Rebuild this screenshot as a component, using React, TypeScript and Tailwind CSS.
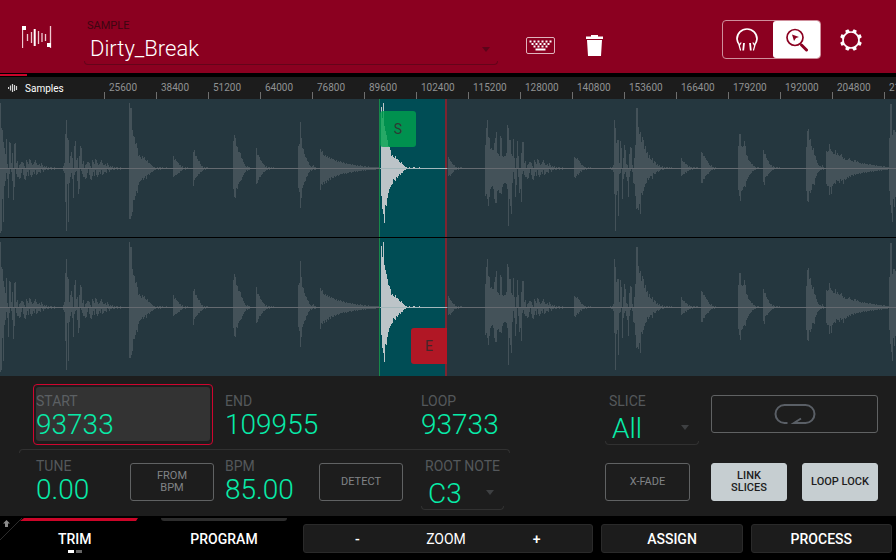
import type { ReactNode } from "react";

type Hit = { x: number; up: number[]; down: number[] };

// Decaying tail shared by the ringing drum hits.
const TAIL_UP = [7, 0, 3, 4, 6, 6, 5, 2, 0, 8, 6, 4, 9, 8, 5, 3, 4, 6, 8, 5, 3, 3, 4, 2, 5, 3, 1, 2, 1, 2, 0, 1, 0, 1, 1, 0, 0, 1];
const TAIL_DOWN = [8, 8, 10, 9, 4, 0, 6, 10, 11, 7, 3, 7, 1, 6, 8, 6, 3, 5, 1, 6, 5, 3, 3, 4, 0, 1, 3, 1, 1, 0, 1, 1, 0, 0, 1, 0, 0, 1];

const HITS: Hit[] = [
  {
    x: 0,
    up: [65, 40, 38, 26, 20, 14, 29, 4, 0, 26, 25, 5, 15, 0, 24, 25, 5, ...TAIL_UP],
    down: [64, 62, 30, 53, 17, 12, 4, 10, 29, 5, 0, 3, 12, 31, 18, 0, 5, ...TAIL_DOWN],
  },
  {
    x: 63,
    up: [2, 5, 34, 48, 30, 28, 5, 12, 16, 10, 0, 22, 27, 8, 10, 0, 12, 22, 20, 4, ...TAIL_UP],
    down: [2, 4, 33, 62, 15, 53, 14, 8, 4, 10, 29, 6, 3, 2, 12, 25, 20, 0, 2, 5, ...TAIL_DOWN],
  },
  {
    x: 129,
    up: [65, 60, 60, 38, 32, 31, 24, 25, 20, 12, 13, 11, 9, 12, 10, 11, 8, 7, 8, 5, 5, 4, 3, 2, 1, 1, 0, 0, 1, 0, 1, 1, 0, 1, 0, 0, 0, 1],
    down: [50, 50, 47, 43, 31, 31, 27, 22, 24, 16, 13, 12, 11, 9, 11, 9, 7, 10, 6, 5, 6, 4, 3, 3, 2, 1, 1, 0, 0, 1, 0, 1],
  },
  { x: 173, up: [12, 8, 9, 7, 6, 5, 3, 3, 1, 2, 0, 0, 1, 0, 1], down: [8, 7, 6, 6, 5, 4, 4, 2, 2, 1, 0, 0, 1] },
  { x: 193, up: [16, 18, 12, 12, 9, 7, 7, 4, 2, 2, 0, 1, 0, 1, 1], down: [17, 11, 9, 8, 7, 5, 5, 3, 3, 2, 1, 0, 1] },
  {
    x: 233,
    up: [27, 33, 30, 22, 21, 16, 16, 15, 10, 9, 6, 4, 2, 1, 2, 1, 1],
    down: [20, 28, 29, 19, 20, 15, 13, 12, 11, 8, 6, 4, 3, 1, 2, 1, 1],
  },
  { x: 256, up: [20, 13, 13, 11, 8, 7, 5, 4, 3, 1, 2, 0, 1, 1, 0, 1, 0, 1], down: [15, 14, 11, 8, 8, 6, 5, 3, 3, 2, 1, 1, 0, 1] },
  {
    x: 298,
    up: [22, 24, 46, 30, 20, 19, 14, 11, 10, 7, 6, 3, 2, 1, 2, 3, 1, 1],
    down: [19, 23, 39, 29, 19, 16, 13, 12, 8, 7, 4, 3, 1, 2, 1, 0, 1, 1],
  },
  {
    x: 320,
    up: [19, 16, 17, 13, 12, 13, 11, 12, 10, 11, 9, 10, 9, 9, 8, 7, 8, 6, 7, 6, 7, 6, 5, 6, 5, 4, 5, 4, 4, 4, 4, 3, 4, 3, 3, 3, 2, 3, 2, 2, 3, 2, 2, 1, 2, 2, 1, 1, 2, 1, 1, 1, 1, 1, 1, 1, 1, 1, 1],
    down: [21, 15, 16, 13, 15, 12, 14, 11, 12, 9, 11, 8, 9, 9, 7, 8, 7, 6, 7, 6, 5, 5, 5, 4, 5, 4, 5, 4, 4, 3, 3, 4, 3, 3, 2, 3, 2, 3, 2, 2, 2, 2, 1, 2, 1, 2, 1, 1, 1, 1, 1, 1, 1, 1, 1, 1],
  },
  {
    x: 381,
    up: [61, 50, 65, 42, 37, 33, 28, 22, 21, 18, 12, 13, 11, 10, 12, 9, 9, 8, 6, 5, 6, 4, 3, 2, 1, 1, 0, 0, 1, 0, 0, 0, 1, 1, 0, 0, 0, 0, 1],
    down: [27, 40, 45, 54, 36, 37, 29, 24, 20, 18, 16, 15, 10, 11, 12, 8, 9, 7, 5, 6, 4, 4, 2, 1, 1],
  },
  { x: 448, up: [11, 9, 7, 6, 4, 3, 3, 1, 1, 0, 1, 0, 1, 1], down: [7, 6, 7, 5, 4, 3, 1, 1, 1, 0, 1] },
  {
    x: 485,
    up: [23, 40, 48, 31, 30, 19, 20, 18, 18, 25, 30, 36, 15, 14, 12, 32, 30, 12, 11, 12, 12, 15, 43, 40, 28, 28, 14, 12, 29, 10, 0, 10, 27, 12, 0, 0, 15, 26, 26, 5, ...TAIL_UP],
    down: [27, 25, 30, 37, 28, 20, 18, 17, 20, 30, 34, 34, 22, 21, 24, 24, 25, 18, 15, 14, 14, 15, 20, 57, 30, 37, 45, 14, 3, 10, 28, 16, 0, 8, 24, 20, 33, 5, 2, 6, ...TAIL_DOWN],
  },
  { x: 574, up: [11, 10, 9, 10, 8, 7, 5, 3, 3, 2, 1, 1, 0, 0, 1, 0, 1], down: [8, 9, 7, 5, 6, 4, 2, 3, 1, 1, 1, 0, 1] },
  {
    x: 610,
    up: [1, 0, 1, 3, 48, 40, 25, 28, 28, 5, 27, 20, 0, 10, 23, 18, 4, 3, 0, 14, 21, 20, 3, 0, 10],
    down: [0, 1, 1, 3, 25, 62, 26, 22, 47, 5, 4, 0, 30, 10, 5, 3, 8, 12, 28, 8, 2, 0, 3, 14, 15],
  },
  {
    x: 635,
    up: [23, 60, 60, 41, 34, 36, 26, 31, 28, 19, 22, 15, 16, 10, 13, 9, 8, 10, 5, 7, 6, 3, 4, 2, 3, 1, 1, 2, 0, 1, 0, 1, 1, 0, 1, 0, 1],
    down: [27, 40, 39, 41, 35, 45, 24, 26, 22, 18, 15, 14, 9, 11, 9, 7, 7, 10, 4, 5, 5, 3, 2, 3, 2, 1, 0, 1, 1],
  },
  { x: 681, up: [10, 7, 6, 6, 4, 4, 3, 1, 2, 1, 1, 0, 1, 1, 0, 1, 1], down: [7, 6, 5, 5, 3, 4, 2, 2, 1, 1, 0, 1] },
  { x: 701, up: [16, 15, 12, 12, 10, 8, 7, 5, 3, 2, 3, 1, 1, 0, 1], down: [14, 14, 10, 10, 7, 6, 5, 5, 3, 2, 1, 1, 0, 1] },
  {
    x: 738,
    up: [22, 34, 34, 22, 21, 22, 27, 22, 13, 12, 8, 7, 6, 4, 4, 2, 2, 1, 0, 1, 1],
    down: [21, 27, 32, 22, 21, 18, 17, 18, 12, 10, 8, 6, 5, 4, 2, 2, 1, 1],
  },
  { x: 763, up: [18, 14, 14, 10, 8, 7, 4, 3, 3, 1, 2, 1, 0, 1, 1, 0, 1], down: [13, 16, 8, 7, 7, 5, 4, 3, 2, 1, 1] },
  {
    x: 806,
    up: [21, 37, 39, 28, 29, 22, 18, 20, 13, 12, 8, 5, 3, 2, 2, 1, 3, 1],
    down: [22, 32, 33, 22, 24, 21, 15, 15, 16, 9, 7, 4, 3, 2, 1, 1, 0, 1],
  },
  {
    x: 826,
    up: [17, 16, 17, 24, 19, 17, 16, 14, 14, 18, 13, 15, 13, 12, 13, 14, 11, 9, 10, 8, 8, 8, 9, 10, 8, 7, 7, 6, 8, 8, 6, 7, 6, 5, 5, 4, 5, 4, 5, 4, 4, 4, 3, 4, 4, 3, 3, 3, 3, 2, 3, 2, 2, 2, 2, 2, 1, 2, 2, 1, 1, 1, 1],
    down: [15, 17, 17, 26, 18, 25, 17, 15, 14, 15, 11, 12, 12, 14, 10, 12, 11, 15, 10, 11, 10, 8, 9, 7, 8, 6, 6, 7, 5, 6, 5, 5, 5, 4, 5, 4, 4, 3, 4, 3, 4, 3, 3, 3, 2, 3, 2, 3, 2, 2, 2, 2, 1, 2, 1, 2, 1, 1, 1, 1, 1, 1],
  },
  { x: 889, up: [30, 64, 64, 33, 38, 38, 36], down: [22, 36, 44, 53, 30, 38, 28] },
];

const MIDDLE = 69;

function wavePath(selected: boolean) {
  return HITS.filter((hit) => (hit.x === 381) === selected)
    .map((hit) =>
      hit.up
        .map((up, i) => `M${hit.x + i} ${MIDDLE - up}h1v${up + (hit.down[i] ?? 0) + 1}h-1z`)
        .join(""),
    )
    .join("");
}

const QUIET_WAVE = wavePath(false);
const SELECTED_WAVE = wavePath(true);

const RULER = [
  25600, 38400, 51200, 64000, 76800, 89600, 102400, 115200, 128000, 140800, 153600, 166400, 179200, 192000, 204800, 217600,
];

function Track() {
  return (
    <svg
      role="img"
      aria-label="Waveform"
      viewBox="0 0 896 138"
      preserveAspectRatio="none"
      shapeRendering="crispEdges"
      className="relative block h-[138px] w-full"
    >
      <path d={QUIET_WAVE} fill="#445259" />
      <rect x="0" y="69" width="896" height="1" fill="#656a70" />
      <path d={SELECTED_WAVE} fill="#bcc4c8" />
      <rect x="380" y="69" width="67" height="1" fill="#a3b7bb" />
    </svg>
  );
}

function Arrow({ className }: { className: string }) {
  return (
    <svg viewBox="0 0 8 5" aria-hidden="true" className={`pointer-events-none absolute h-[5px] w-2 ${className}`}>
      <path d="M0 0h8L4 5z" fill="currentColor" />
    </svg>
  );
}

function Field({ id, label, value, active }: { id: string; label: string; value: string; active?: boolean }) {
  return (
    <div className={active ? "rounded-[3px] bg-[#333333] pt-1.5" : ""}>
      <label htmlFor={id} className={`block text-sm leading-4 ${active ? "text-[#5c6063]" : "text-[#54585b]"}`}>
        {label}
      </label>
      <input
        id={id}
        defaultValue={value}
        className="block h-8 w-full bg-transparent text-[28px] font-light leading-8 text-[#08eba8] outline-none"
      />
    </div>
  );
}

function Picker({ id, label, options }: { id: string; label: string; options: string[] }) {
  return (
    <div>
      <label htmlFor={id} className="block pl-1 text-sm leading-4 text-[#54585b]">
        {label}
      </label>
      <div className="relative">
        <select
          id={id}
          className="block h-9 w-full appearance-none bg-transparent pl-[7px] pt-1 text-[28px] font-light leading-8 text-[#08eba8] outline-none"
        >
          {options.map((option) => (
            <option key={option}>{option}</option>
          ))}
        </select>
        <div className="pointer-events-none absolute inset-x-0 bottom-0 h-1 rounded-b border-x border-b border-[#313131]" />
        <Arrow className="right-2.5 top-4 text-[#3e4042]" />
      </div>
    </div>
  );
}

function PadButton({ lit, className, children }: { lit?: boolean; className?: string; children: ReactNode }) {
  return (
    <button
      type="button"
      className={`flex h-[38px] items-center justify-center rounded-[3px] border text-center text-[11px] leading-3 ${
        lit ? "border-[#c6ced1] bg-[#c6ced1] font-medium text-[#1d1d1d]" : "border-[#606263] text-[#808386]"
      } ${className ?? ""}`}
    >
      {children}
    </button>
  );
}

function Header() {
  return (
    <header className="flex h-[73px] bg-[#8b0020] pl-[22px] pr-[34px] text-white">
      <svg viewBox="0 0 30 24" aria-hidden="true" className="mt-[25px] h-6 w-[30px]">
        <path d="M.5 1v22M28.500 1v22M5.500 9v7M9.500 7v11M16.500 6v13M20 8v9M23.500 9v7" stroke="#efc9d0" strokeWidth="1.300" fill="none" />
        <path d="M12.700 4v17" stroke="white" strokeWidth="2" />
        <path d="M0 1h4v4H0zM25 18h4v4h-4z" fill="white" />
      </svg>
      <div className="ml-8 min-w-0 flex-1 pt-[19px]">
        <label htmlFor="sample" className="block pl-[3px] text-[11px] leading-[14px] text-[#3d0610]">
          SAMPLE
        </label>
        <div className="relative">
          <select id="sample" className="block h-8 w-full appearance-none bg-transparent pl-1.5 text-[22px] font-light leading-8 outline-none">
            <option>Dirty_Break</option>
          </select>
          <div className="pointer-events-none absolute inset-x-0 bottom-0 h-1 rounded-b border-x border-b border-[#65041a]" />
          <Arrow className="right-2 top-3.5 text-[#5d041a]" />
        </div>
      </div>
      <button type="button" aria-label="Keyboard" className="ml-7 mt-[37px] h-[17px]">
        <svg viewBox="0 0 29 17" className="h-[17px] w-[29px]">
          <rect x=".5" y=".5" width="28" height="16" rx="1.500" fill="none" stroke="#dfb3bc" />
          <path d="M3.500 4.500h23M5.500 7h19M7.500 9.500h15" stroke="white" strokeWidth="2" strokeDasharray="2 2" />
          <path d="M9.500 12.500h10" stroke="white" strokeWidth="2" />
        </svg>
      </button>
      <button type="button" aria-label="Delete" className="ml-[31px] mt-[35px] h-[21px]">
        <svg viewBox="0 0 17 21" className="h-[21px] w-[17px]">
          <path d="M0 1.500h5V0h7v1.500h5V4H0zM1 5h15l-1 16H2z" fill="white" />
        </svg>
      </button>
      <div className="ml-[119px] mt-5 flex h-[39px] w-[99px] rounded border border-[#cf8f9c]">
        <button type="button" aria-label="Audition" className="flex w-[50px] items-center justify-center">
          <svg viewBox="0 0 24 24" className="h-6 w-6" fill="none" stroke="white">
            <path d="M3.800 17.500C2 15 1 13.200 1 11a10 10 0 0 1 20 0c0 2.200-1 4-2.800 6.500" strokeWidth="1.700" />
            <path d="M5.200 14.500 3.200 17.500 4.600 22.500M16.800 14.500l2 3-1.400 5" strokeWidth="1.200" />
            <path d="M8 15 7.200 22.500M14 15l.8 7.500" strokeWidth="1.800" />
          </svg>
        </button>
        <button type="button" aria-label="Cursor zoom" className="flex flex-1 items-center justify-center rounded-[3px] bg-white text-[#8b0020]">
          <svg viewBox="0 0 24 24" className="h-6 w-6">
            <circle cx="10" cy="9.500" r="8" fill="none" stroke="currentColor" strokeWidth="1.700" />
            <path d="M7 6.500l7 2.500-3 1-2 3z" fill="currentColor" />
            <path d="m16.500 17 5 5" stroke="currentColor" strokeWidth="3" strokeLinecap="round" />
          </svg>
        </button>
      </div>
      <button type="button" aria-label="Settings" className="ml-[19px] mt-[29px] h-[22px]">
        <svg viewBox="-11 -11 22 22" className="h-[22px] w-[22px]">
          <circle r="8" fill="none" stroke="white" strokeWidth="1.700" />
          {[22.5, 67.5, 112.5, 157.5, 202.5, 247.5, 292.5, 337.5].map((angle) => (
            <path key={angle} d="M-2.200-8-1.600-11h3.200L2.200-8z" fill="white" transform={`rotate(${angle})`} />
          ))}
        </svg>
      </button>
    </header>
  );
}

function Ruler() {
  return (
    <div className="flex h-[22px] overflow-hidden bg-[#1c1c1c]">
      <div className="flex w-[104px] shrink-0 items-center pl-2 text-[10px] text-white">
        <svg viewBox="0 0 10 8" aria-hidden="true" className="mr-[7px] h-2 w-2.5">
          <path d="M.5 3v2M2.500 1.500v5M4.500 0v8M6.500 1v6M8.500 2v4" stroke="#d5d5d5" strokeWidth="1.200" />
        </svg>
        Samples
      </div>
      <ol className="flex min-w-0 flex-1">
        {RULER.map((mark) => (
          <li key={mark} className="relative w-[52px] shrink-0 pl-[5px] text-[10px] leading-[22px] text-[#909293]">
            <i className="absolute bottom-0 left-0 h-[7px] w-px bg-[#6e6e6e]" />
            {mark}
          </li>
        ))}
      </ol>
    </div>
  );
}

function Waves() {
  return (
    <section aria-label="Sample" className="relative bg-[#25373f]">
      <div className="absolute inset-y-0 left-[42.3%] w-[7.6%] border-l border-r-2 border-l-[#17884a] border-r-[#7d2430] bg-[#004d55]" />
      <Track />
      <div className="relative h-px bg-black" />
      <Track />
      <div className="pointer-events-none absolute inset-y-0 left-[42.3%] w-[7.6%] text-sm text-[#2f3a33]">
        <span className="absolute left-px top-3 flex h-9 w-9 items-center justify-center rounded-[3px] bg-[#00a24e]/80">S</span>
        <span className="absolute bottom-3 right-0 flex h-9 w-9 items-center justify-center rounded-l-[3px] bg-[#bb1423]/95 text-[#43262a]">E</span>
      </div>
    </section>
  );
}

function Controls() {
  return (
    <section className="bg-[#1d1d1d] pb-1.5 pl-[34px] pr-[18px] pt-2">
      <div className="grid grid-cols-[96fr_95fr_94fr_102fr_184fr_106fr_91fr_76fr]">
        <div className="col-span-2 -ml-px mr-3 h-[61px] rounded border border-[#d0052f] p-0.5">
          <Field id="start" label="START" value="93733" active />
        </div>
        <div className="col-span-2 pt-[9px]">
          <Field id="end" label="END" value="109955" />
        </div>
        <div className="pt-[9px]">
          <Field id="loop" label="LOOP" value="93733" />
        </div>
        <div className="mr-3 pt-[9px]">
          <Picker id="slice" label="SLICE" options={["All"]} />
        </div>
        <PadButton className="col-span-2 mt-[11px]">
          <svg viewBox="0 0 42 20" aria-label="Loop" className="h-5 w-[42px]" fill="none" stroke="#5a5f66" strokeWidth="2">
            <path d="M13.500 19H10.500a9 9 0 0 1 0-18h21a9 9 0 0 1 0 18H20l7-4.500" />
          </svg>
        </PadButton>

        <div className="col-span-5 -ml-[15px] mb-1 mr-[95px] mt-1 h-1 rounded-t border-x border-t border-[#313131]" />
        <div className="col-span-3" />

        <div className="pl-0.5 pt-px">
          <Field id="tune" label="TUNE" value="0.00" />
        </div>
        <PadButton className="mr-[11px] mt-1.5">
          FROM
          <br />
          BPM
        </PadButton>
        <div className="pt-px">
          <Field id="bpm" label="BPM" value="85.00" />
        </div>
        <PadButton className="mr-[18px] mt-1.5">DETECT</PadButton>
        <div className="mr-[101px] pt-px">
          <Picker id="root" label="ROOT NOTE" options={["C3"]} />
        </div>
        <PadButton className="mr-[21px] mt-1.5">X-FADE</PadButton>
        <PadButton lit className="mr-[15px] mt-1.5">
          LINK
          <br />
          SLICES
        </PadButton>
        <PadButton lit className="mt-1.5">LOOP LOCK</PadButton>
      </div>
    </section>
  );
}

function Footer() {
  const boxed = "my-2 mx-1 h-[29px] rounded-[3px] border border-[#2a2a2a] bg-[#1c1c1c]";
  return (
    <nav className="grid grid-cols-6 bg-black text-sm font-medium text-white">
      <div className="relative">
        <svg viewBox="0 0 140 28" aria-hidden="true" className="absolute left-0 top-0 h-7 w-[140px]">
          <path d="M24 2h114l-2 3H20z" fill="#cb0528" />
          <path d="M22 2 0 24" stroke="#2c2c2c" />
          <path d="M6.500 4 3 7.500h2V11h3V7.500h2z" fill="#8b8b8b" />
        </svg>
        <button type="button" className="relative flex h-11 w-full flex-col items-center pt-3.5">
          <span className="leading-[18px]">TRIM</span>
          <span className="mt-0.5 flex gap-0.5">
            <i className="h-[3px] w-1.5 bg-white" />
            <i className="h-[3px] w-1.5 bg-[#666]" />
          </span>
        </button>
      </div>
      <div className="px-3">
        <button type="button" className="flex h-11 w-full flex-col items-center">
          <span className="mt-0.5 h-[3px] w-full rounded-b-[3px] bg-[#2d2d2d]" />
          <span className="mt-[9px] leading-[18px]">PROGRAM</span>
        </button>
      </div>
      <div className={`col-span-2 grid grid-cols-[108fr_70fr_112fr] items-center text-center ${boxed}`}>
        <button type="button" aria-label="Zoom out">-</button>
        <span className="font-normal">ZOOM</span>
        <button type="button" aria-label="Zoom in">+</button>
      </div>
      <button type="button" className={boxed}>ASSIGN</button>
      <button type="button" className={boxed}>PROCESS</button>
    </nav>
  );
}

export default function App() {
  return (
    <main className="w-full overflow-hidden bg-black font-['Roboto','Liberation_Sans',sans-serif]">
      <Header />
      <div className="h-1 bg-black py-px">
        <div className="h-0.5 w-[3%] bg-[#c9042a]" />
      </div>
      <Ruler />
      <Waves />
      <Controls />
      <Footer />
    </main>
  );
}
